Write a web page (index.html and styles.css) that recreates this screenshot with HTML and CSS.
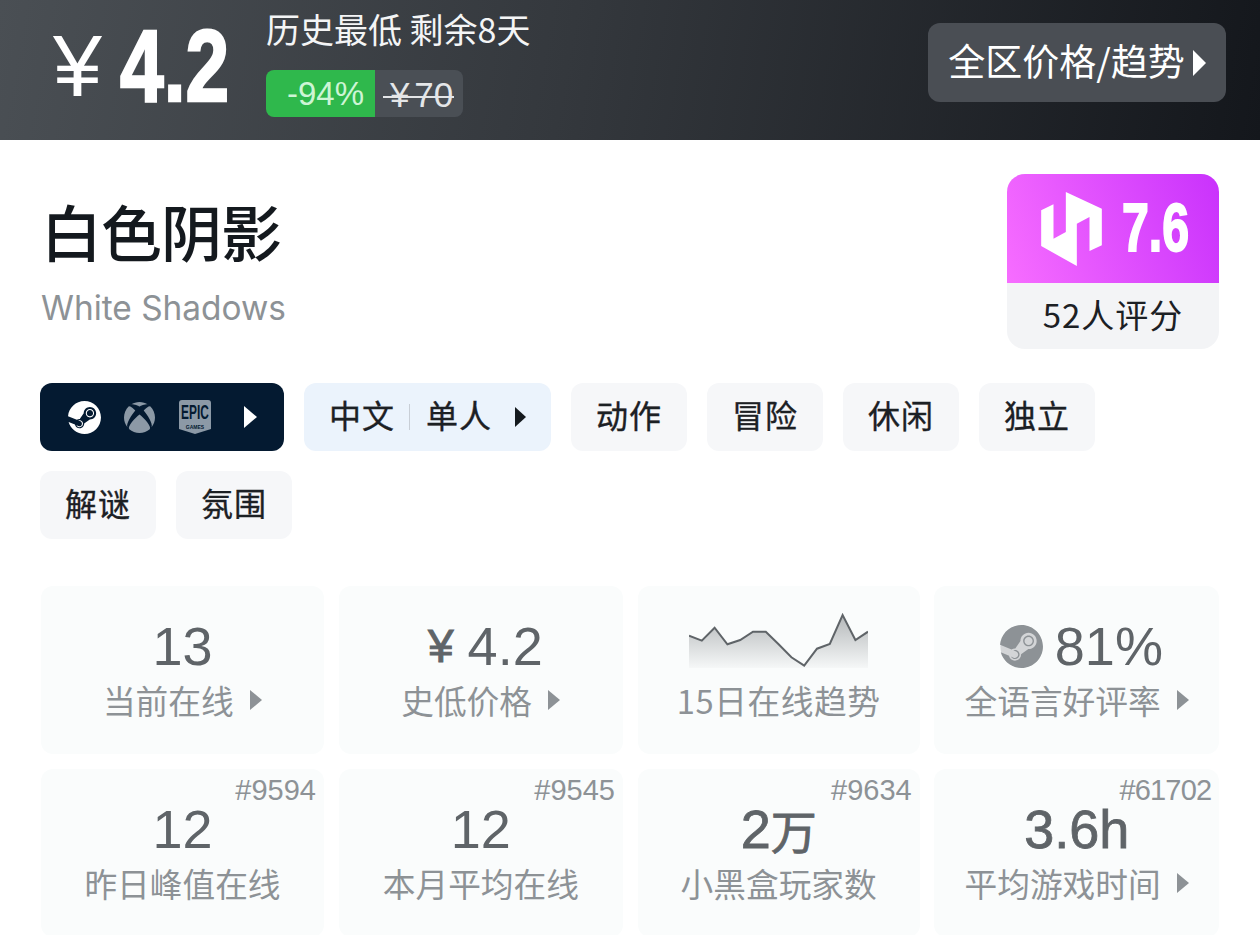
FILE: index.html
```html
<!DOCTYPE html>
<html lang="zh">
<head>
<meta charset="utf-8">
<title>白色阴影</title>
<link rel="stylesheet" href="styles.css">
</head>
<body>
<header class="bar">
  <div class="price"><span class="yen">¥</span><span class="big">4.2</span></div>
  <div class="deal">
    <div class="deal-text">历史最低 剩余8天</div>
    <div class="deal-tags"><span class="off">-94%</span><span class="was"><s>¥ 70</s></span></div>
  </div>
  <button class="region"><span>全区价格/趋势</span><i class="caret caret-white caret-region"></i></button>
</header>
<main class="content">
  <section class="head">
    <div class="names">
      <h1>白色阴影</h1>
      <p>White Shadows</p>
    </div>
    <div class="score">
      <div class="score-top">
        <svg class="hb" viewBox="423 575 182 222"><path fill="#fff" d="M497 575 605 625V735L568 752V650L530 670V797L423 737V630L460 612V715L497 695Z"/></svg>
        <span class="score-num">7.6</span>
      </div>
      <div class="score-bottom">52人评分</div>
    </div>
  </section>
  <section class="tags">
    <div class="tag tag-dark">
      <svg class="pf pf-steam" viewBox="0 0 24 24"><path fill="#fff" d="M11.979 0C5.678 0 .511 4.86.022 11.037l6.432 2.658c.545-.371 1.203-.59 1.912-.59.063 0 .125.004.188.006l2.861-4.142V8.91c0-2.495 2.028-4.524 4.524-4.524 2.494 0 4.524 2.031 4.524 4.527s-2.03 4.525-4.524 4.525h-.105l-4.076 2.911c0 .052.004.105.004.159 0 1.875-1.515 3.396-3.39 3.396-1.635 0-3.016-1.173-3.331-2.727L.436 15.27C1.862 20.307 6.486 24 11.979 24c6.627 0 11.999-5.373 11.999-12S18.605 0 11.979 0zM7.54 18.21l-1.473-.61c.262.543.714.999 1.314 1.25 1.297.539 2.793-.076 3.332-1.375.263-.63.264-1.319.005-1.949s-.75-1.121-1.377-1.383c-.624-.26-1.29-.249-1.878-.03l1.523.63c.956.4 1.409 1.5 1.009 2.455-.397.957-1.497 1.41-2.454 1.012H7.54zm11.415-9.303c0-1.662-1.353-3.015-3.015-3.015-1.665 0-3.015 1.353-3.015 3.015 0 1.665 1.35 3.015 3.015 3.015 1.663 0 3.015-1.35 3.015-3.015zm-5.273-.005c0-1.252 1.013-2.266 2.265-2.266 1.249 0 2.266 1.014 2.266 2.266 0 1.251-1.017 2.265-2.266 2.265-1.253 0-2.265-1.014-2.265-2.265z"/></svg>
      <svg class="pf pf-xbox" viewBox="0 0 24 24"><path fill="#8c99a6" d="M4.102 21.033C6.211 22.881 8.977 24 12 24c3.026 0 5.789-1.119 7.902-2.967 1.877-1.912-4.316-8.709-7.902-11.417-3.582 2.708-9.779 9.505-7.898 11.417zm11.16-14.406c2.5 2.961 7.484 10.313 6.076 12.912C23.002 17.48 24 14.861 24 12.004c0-3.34-1.365-6.362-3.57-8.536 0 0-.027-.022-.082-.042-.063-.022-.152-.045-.281-.045-.592 0-1.985.434-4.805 3.246zM3.654 3.426c-.057.02-.082.041-.086.042C1.365 5.642 0 8.664 0 12.004c0 2.854.998 5.473 2.661 7.533-1.401-2.605 3.579-9.951 6.08-12.91-2.82-2.813-4.216-3.245-4.806-3.245-.131 0-.223.021-.281.046v-.002zM12 3.551S9.055 1.828 6.755 1.746c-.903-.033-1.454.295-1.521.339C7.379.646 9.659 0 11.984 0H12c2.334 0 4.605.646 6.766 2.085-.068-.046-.615-.372-1.52-.339C14.946 1.828 12 3.545 12 3.545v.006z"/></svg>
      <svg class="pf pf-epic" viewBox="0 0 32 34"><path fill="#8c99a6" d="M3 0H29Q32 0 32 3V29L16 34 0 29V3Q0 0 3 0Z"/><text class="epic-a" transform="translate(16 19) scale(.7 1.15)" text-anchor="middle">EPIC</text><text class="epic-b" x="16" y="28.5" text-anchor="middle">GAMES</text></svg>
      <i class="caret caret-white caret-pf"></i>
    </div>
    <div class="tag tag-blue"><span>中文</span><i class="sep"></i><span>单人</span><i class="caret caret-dark"></i></div>
    <div class="tag"><span>动作</span></div>
    <div class="tag"><span>冒险</span></div>
    <div class="tag"><span>休闲</span></div>
    <div class="tag"><span>独立</span></div>
    <div class="tag"><span>解谜</span></div>
    <div class="tag"><span>氛围</span></div>
  </section>
  <section class="stats">
    <div class="card"><div class="num">13</div><div class="label">当前在线<i class="caret caret-grey"></i></div></div>
    <div class="card"><div class="num num-shift"><span class="num-yen">¥</span>4.2</div><div class="label">史低价格<i class="caret caret-grey"></i></div></div>
    <div class="card">
      <div class="num num-spark">
        <svg class="spark" viewBox="0 0 179 60">
          <defs><linearGradient id="sg" x1="0" y1="0" x2="0" y2="1"><stop offset="0" stop-color="#5f6468" stop-opacity=".45"/><stop offset="1" stop-color="#5f6468" stop-opacity=".03"/></linearGradient></defs>
          <path fill="url(#sg)" d="M0 25.7 12.8 30.7 25.6 17.7 38.4 34.3 51.2 30 64 21.7 76.8 21.7 89.6 34.3 102.4 47.3 115.2 55.7 128 38.7 140.8 34 153.6 5 166.4 30 179 21.7V58H0Z"/>
          <path fill="none" stroke="#5f6468" stroke-width="2" d="M0 25.7 12.8 30.7 25.6 17.7 38.4 34.3 51.2 30 64 21.7 76.8 21.7 89.6 34.3 102.4 47.3 115.2 55.7 128 38.7 140.8 34 153.6 5 166.4 30 179 21.7"/>
        </svg>
      </div>
      <div class="label label-wide">15日在线趋势</div>
    </div>
    <div class="card">
      <div class="num num-shift">
        <svg class="steam-grey" viewBox="0 0 24 24"><circle cx="12" cy="12" r="11.8" fill="#d3d5d7"/><path fill="#8d9296" d="M11.979 0C5.678 0 .511 4.86.022 11.037l6.432 2.658c.545-.371 1.203-.59 1.912-.59.063 0 .125.004.188.006l2.861-4.142V8.91c0-2.495 2.028-4.524 4.524-4.524 2.494 0 4.524 2.031 4.524 4.527s-2.03 4.525-4.524 4.525h-.105l-4.076 2.911c0 .052.004.105.004.159 0 1.875-1.515 3.396-3.39 3.396-1.635 0-3.016-1.173-3.331-2.727L.436 15.27C1.862 20.307 6.486 24 11.979 24c6.627 0 11.999-5.373 11.999-12S18.605 0 11.979 0zM7.54 18.21l-1.473-.61c.262.543.714.999 1.314 1.25 1.297.539 2.793-.076 3.332-1.375.263-.63.264-1.319.005-1.949s-.75-1.121-1.377-1.383c-.624-.26-1.29-.249-1.878-.03l1.523.63c.956.4 1.409 1.5 1.009 2.455-.397.957-1.497 1.41-2.454 1.012H7.54zm11.415-9.303c0-1.662-1.353-3.015-3.015-3.015-1.665 0-3.015 1.353-3.015 3.015 0 1.665 1.35 3.015 3.015 3.015 1.663 0 3.015-1.35 3.015-3.015zm-5.273-.005c0-1.252 1.013-2.266 2.265-2.266 1.249 0 2.266 1.014 2.266 2.266 0 1.251-1.017 2.265-2.266 2.265-1.253 0-2.265-1.014-2.265-2.265z"/></svg>81%
      </div>
      <div class="label">全语言好评率<i class="caret caret-grey"></i></div>
    </div>
    <div class="card"><span class="rank">#9594</span><div class="num">12</div><div class="label">昨日峰值在线</div></div>
    <div class="card"><span class="rank">#9545</span><div class="num">12</div><div class="label">本月平均在线</div></div>
    <div class="card"><span class="rank">#9634</span><div class="num num-strong">2<span class="wan">万</span></div><div class="label">小黑盒玩家数</div></div>
    <div class="card"><span class="rank rank-tight">#61702</span><div class="num num-strong">3.6h</div><div class="label">平均游戏时间<i class="caret caret-grey"></i></div></div>
  </section>
</main>
</body>
</html>
```

FILE: styles.css
```css
* { box-sizing: border-box; }
html, body { margin: 0; padding: 0; height: 935px; overflow: hidden; background: #fff; }
body { font-family: "Noto Sans CJK SC", sans-serif; color: #1c2024; }

.caret { display: inline-block; flex: none; width: 0; height: 0; border-style: solid; border-color: transparent; border-width: 10px 0 10px 12px; }
.caret-white { border-left-color: #fff; }
.caret-dark { border-left-color: #14191e; }
.caret-grey { border-left-color: #8d9296; margin-left: 16.5px; }

.bar { height: 140px; display: flex; align-items: flex-start; padding-left: 53px; background: linear-gradient(100deg, #4a4f54 0%, #34383d 45%, #14171c 100%); color: #fff; }
.price { display: flex; align-items: center; height: 132px; width: 213px; flex: none; }
.yen { width: 67px; flex: none; font-family: "Liberation Sans", sans-serif; font-size: 88px; line-height: 1; }
.big { display: inline-block; width: 110px; flex: none; font-family: "Liberation Sans", sans-serif; font-weight: 700; font-size: 102px; line-height: 1; -webkit-text-stroke: 2.5px #fff; transform: scaleX(.77); transform-origin: left center; }
.deal { padding-top: 6px; }
.deal-text { font-size: 34px; line-height: 46px; color: #f4f5f6; white-space: nowrap; }
.deal-tags { display: flex; height: 47px; margin-top: 18px; border-radius: 8px; overflow: hidden; width: 197px; }
.off { width: 109px; background: #2fb84c; color: #cdf5d5; font-family: "Liberation Sans", sans-serif; font-size: 33px; line-height: 47px; text-align: right; padding-right: 11px; }
.was { flex: 1; background: #4a4f55; color: #e4e6e8; font-family: "Liberation Sans", sans-serif; font-size: 35px; line-height: 49px; padding-left: 8px; white-space: nowrap; }
.was s { position: relative; display: inline-block; padding: 0 1px 0 7px; word-spacing: -5px; text-decoration: none; }
.was s::after { content: ""; position: absolute; left: 0; right: 0; top: 26px; height: 2px; background: #e4e6e8; }
.region { margin: 23px 34px 0 auto; width: 298px; height: 79px; border: 0; border-radius: 12px; background: #4a4e54; color: #fff; font-family: inherit; font-size: 37px; display: flex; align-items: center; justify-content: center; gap: 8px; padding: 0 0 5px; }
.caret-region { border-width: 13px 0 13px 13px; margin-top: 5px; }

.content { padding: 0 41px 0 40px; }
.head { display: flex; justify-content: space-between; align-items: flex-start; padding-top: 34px; }
.names h1 { margin: 18px 0 0 1px; font-size: 61px; line-height: 78px; font-weight: 500; color: #14191e; letter-spacing: -1px; }
.names p { margin: 15px 0 0 1px; font-family: "Inter", sans-serif; font-size: 33.4px; line-height: 46px; color: #8d9296; white-space: nowrap; }
.score { width: 212px; border-radius: 18px; overflow: hidden; background: #f3f4f6; flex: none; }
.score-top { height: 109px; display: flex; align-items: center; padding-left: 34px; gap: 20px; background: linear-gradient(70deg, #f76dff 0%, #c932fc 100%); }
.hb { width: 61px; height: 74px; flex: none; }
.score-num { display: inline-block; width: 66px; flex: none; margin-top: -4px; font-family: "Liberation Sans", sans-serif; font-weight: 700; font-size: 68px; line-height: 1; color: #fff; -webkit-text-stroke: 2px #fff; transform: scaleX(.71); transform-origin: left center; }
.score-bottom { height: 66px; font-size: 33px; line-height: 62px; text-align: center; color: #1c2024; letter-spacing: 1px; }

.tags { display: flex; flex-wrap: wrap; gap: 20px; margin-top: 34px; }
.tag { height: 68px; width: 116px; border-radius: 12px; background: #f6f7f9; display: flex; align-items: center; justify-content: center; padding-bottom: 6px; font-size: 32px; color: #1c2024; letter-spacing: 1px; -webkit-text-stroke: .35px #1c2024; }
.tag-dark { width: 244px; background: #041a31; justify-content: flex-start; padding: 0 0 0 28px; -webkit-text-stroke: 0; }
.pf { display: block; flex: none; }
.pf-steam { width: 33px; height: 33px; }
.pf-xbox { width: 31px; height: 31px; margin-left: 23px; }
.pf-epic { width: 32px; height: 34px; margin-left: 24px; }
.epic-a { font-family: "Liberation Sans", sans-serif; font-size: 17px; font-weight: 700; fill: #041a31; letter-spacing: 0; }
.epic-b { font-family: "Liberation Sans", sans-serif; font-size: 5px; font-weight: 700; fill: #041a31; letter-spacing: 0; }
.caret-pf { margin-left: 33px; border-width: 11px 0 11px 13px; }
.tag-blue { width: 247px; background: #ebf3fc; justify-content: flex-start; padding-left: 25px; }
.sep { width: 1px; height: 26px; background: #c8ced6; margin: 6px 16px 0 14px; flex: none; }
.caret-dark { margin: 6px 0 0 23px; border-width: 10px 0 10px 11px; }

.stats { display: grid; grid-template-columns: 283px 284.3px 282px 285px; gap: 15px 14.7px; margin: 47px 0 0 1px; }
.card { position: relative; height: 168px; border-radius: 12px; background: #fafcfc; padding-top: 29px; text-align: center; }
.num { height: 62px; font-family: "Liberation Sans", sans-serif; font-size: 54px; line-height: 62px; color: #5f6468; display: flex; align-items: center; justify-content: center; }
.num-shift { padding-left: 9px; }
.num-strong { -webkit-text-stroke: .8px #5f6468; }
.num-yen { font-size: 46px; margin-right: 14px; -webkit-text-stroke: 1px #5f6468; }
.wan { font-family: "Noto Sans CJK SC", sans-serif; font-size: 46px; }
.num-spark { align-items: flex-start; }
.spark { width: 179px; height: 60px; margin: -5px 0 0 -1px; display: block; }
.steam-grey { width: 43px; height: 43px; margin-right: 12px; flex: none; }
.label { height: 46px; font-size: 32.7px; line-height: 46px; color: #8d9296; display: flex; align-items: center; justify-content: center; }
.label-wide { letter-spacing: .6px; }
.rank { position: absolute; top: 3px; right: 8px; font-family: "Liberation Sans", sans-serif; font-size: 29px; line-height: 36px; color: #8d9296; }
.rank-tight { letter-spacing: -.8px; }
```
